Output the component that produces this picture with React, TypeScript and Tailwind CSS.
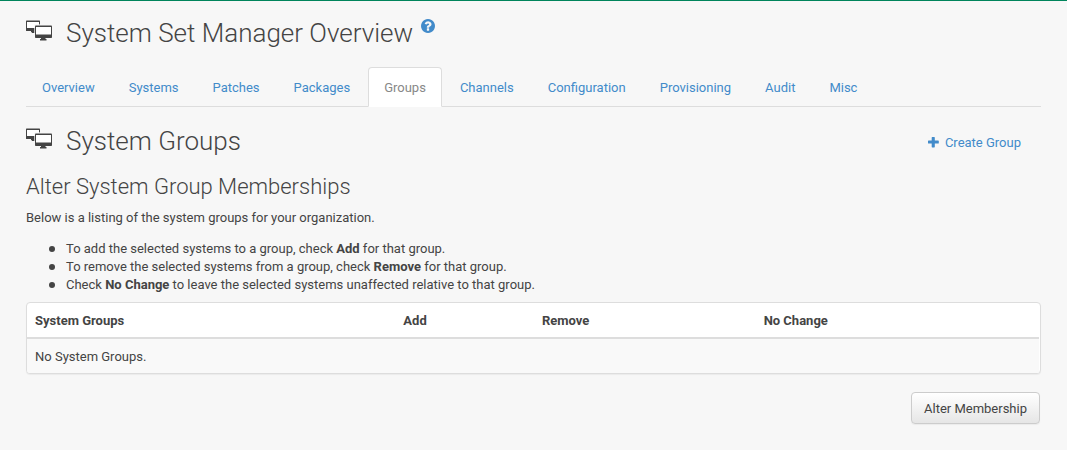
import React from "react";

const tabs = [
  "Overview",
  "Systems",
  "Patches",
  "Packages",
  "Groups",
  "Channels",
  "Configuration",
  "Provisioning",
  "Audit",
  "Misc",
];

function SystemsIcon() {
  return (
    <svg viewBox="0 0 26 21" className="h-[21px] w-[26px] shrink-0" aria-hidden="true">
      <rect x="0" y="0.500" width="14" height="10.500" rx="0.600" fill="#444" />
      <rect x="1" y="2" width="12" height="6" fill="#fff" />
      <path fill="#444" d="M5 11h5v2H6v-0.700H5z" />
      <rect x="8.300" y="4.400" width="17.700" height="13" fill="#f7f7f7" />
      <rect x="9" y="5.500" width="17" height="12.500" rx="0.800" fill="#444" />
      <rect x="10" y="7" width="15" height="7.500" fill="#fff" />
      <path fill="#444" d="M15 18h4.500v1h1v1.500H14V19h1z" />
    </svg>
  );
}

function HelpIcon() {
  return (
    <svg viewBox="128 128 1536 1536" className="size-[14px]" aria-hidden="true">
      <path
        fill="currentColor"
        d="M1024 1376v-192q0-14-9-23t-23-9h-192q-14 0-23 9t-9 23v192q0 14 9 23t23 9h192q14 0 23-9t9-23zm256-672q0-88-55.500-163t-138.500-116-170.500-41q-243 0-371 213-15 24 8 42l132 100q7 6 19 6 16 0 25-12 53-68 86-92 34-24 86-24 48 0 85.500 26t37.500 59q0 38-20 61t-68 45q-63 28-115.500 86.500t-52.500 125.500v36q0 14 9 23t23 9h192q14 0 23-9t9-23q0-19 21.500-49.500t54.500-49.500q32-18 49-28.500t46-35 44.500-48 28-60.500 12.500-81zm384 192q0 209-103 385.500t-279.500 279.500-385.500 103-385.500-103-279.500-279.500-103-385.500 103-385.500 279.500-279.500 385.500-103 385.500 103 279.500 279.500 103 385.500z"
      />
    </svg>
  );
}

function PlusIcon() {
  return (
    <svg viewBox="0 0 11 11" className="size-[11px]" aria-hidden="true">
      <path
        fill="currentColor"
        d="M4.300 0h1.900q.6 0 .6.600V3.500h3.400q.6 0 .6.600v1.900q0 .6-.6.600H6.800v3.200q0 .6-.6.600H4.300q-.6 0-.6-.6V6.600H.6Q0 6.600 0 6V4.100Q0 3.500.6 3.500h3.100V.6q0-.6.6-.6z"
      />
    </svg>
  );
}

const bullet =
  "before:-ml-[17px] before:mr-[11px] before:mb-[2px] before:inline-block before:size-[6px] before:rounded-full before:bg-[#444] before:align-middle before:content-['']";

export default function App() {
  return (
    <div className="min-h-screen border-t border-[#00855c] bg-[#f7f7f7] px-[26px] pt-[17px] font-['Roboto',sans-serif] text-[13px] leading-[18px] text-[#444]">
      <header className="flex h-[30px] items-start">
        <div className="mr-[14px] pt-[2px]">
          <SystemsIcon />
        </div>
        <h1 className="text-[26px] leading-[30px] font-light">System Set Manager Overview</h1>
        <a href="#help" aria-label="Help" className="ml-2 pt-px text-[#428bca]">
          <HelpIcon />
        </a>
      </header>

      <nav className="mt-[19px] border-b border-[#ddd]">
        <ul className="-mb-px flex gap-[2px]">
          {tabs.map((tab) => (
            <li key={tab}>
              <a
                href={"#" + tab.toLowerCase()}
                aria-current={tab === "Groups" ? "page" : undefined}
                className={
                  tab === "Groups"
                    ? "block rounded-t-[4px] border border-[#ddd] border-b-white bg-white px-[15px] pt-[11px] pb-[9px] text-[#888]"
                    : "block border border-transparent px-[15px] pt-[11px] pb-[9px] text-[#428bca]"
                }
              >
                {tab}
              </a>
            </li>
          ))}
        </ul>
      </nav>

      <main>
        <div className="mt-[19px] flex h-[30px] items-start justify-between">
          <div className="flex items-start">
            <div className="mr-[14px] pt-[2px]">
              <SystemsIcon />
            </div>
            <h2 className="text-[26px] leading-[30px] font-light">System Groups</h2>
          </div>
          <a href="#create" className="mt-[8px] mr-5 flex items-start gap-[6px] text-[#428bca]">
            <span className="pt-[3px]">
              <PlusIcon />
            </span>
            Create Group
          </a>
        </div>

        <h3 className="mt-[19px] text-[22px] leading-6 font-light">Alter System Group Memberships</h3>
        <p className="mt-[10px]">Below is a listing of the system groups for your organization.</p>
        <ul className="mt-[13px] pl-10">
          <li className={bullet}>
            To add the selected systems to a group, check <strong>Add</strong> for that group.
          </li>
          <li className={bullet}>
            To remove the selected systems from a group, check <strong>Remove</strong> for that group.
          </li>
          <li className={bullet}>
            Check <strong>No Change</strong> to leave the selected systems unaffected relative to that group.
          </li>
        </ul>

        <div className="mt-2 overflow-hidden rounded-[4px] border border-[#ddd] bg-white pr-px shadow-[0_1px_1px_rgba(0,0,0,0.05)]">
          <table className="w-full table-fixed border-collapse text-left">
            <thead>
              <tr className="border-b-2 border-[#ddd]">
                <th className="w-[36.4%] px-2 pt-[9px] pb-[7px] font-bold">System Groups</th>
                <th className="w-[13.7%] px-2 pt-[9px] pb-[7px] font-bold">Add</th>
                <th className="w-[21.9%] px-2 pt-[9px] pb-[7px] font-bold">Remove</th>
                <th className="px-2 pt-[9px] pb-[7px] font-bold">No Change</th>
              </tr>
            </thead>
            <tbody>
              <tr className="bg-[#f9f9f9]">
                <td colSpan={4} className="px-2 pt-[9px] pb-[7px]">
                  No System Groups.
                </td>
              </tr>
            </tbody>
          </table>
        </div>

        <div className="mt-[18px] flex justify-end pr-px">
          <button
            type="button"
            className="rounded-[4px] border border-[#ccc] bg-linear-to-b from-white to-[#e6e6e6] px-3 pt-[7px] pb-[5px] shadow-[0_1px_1px_rgba(0,0,0,0.05)]"
          >
            Alter Membership
          </button>
        </div>
      </main>
    </div>
  );
}
